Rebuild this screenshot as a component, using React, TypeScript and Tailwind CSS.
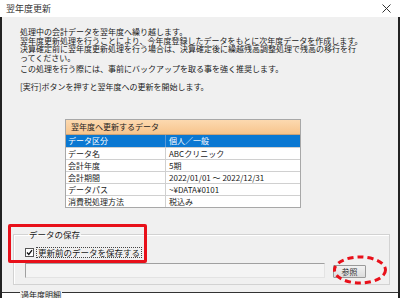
import React from "react";

const rows: [string, string][] = [
  ["データ区分", "個人／一般"],
  ["データ名", "ABCクリニック"],
  ["会計年度", "5期"],
  ["会計期間", "2022/01/01 ～ 2022/12/31"],
  ["データパス", "~¥DATA¥0101"],
  ["消費税処理方法", "税込み"],
];

function CloseIcon() {
  return (
    <svg width="9" height="9" viewBox="0 0 9 9">
      <path d="M0.5 0.5 L8.5 8.5 M8.5 0.5 L0.5 8.5" stroke="#333" strokeWidth="1" />
    </svg>
  );
}

export default function App() {
  return (
    <div
      className="relative w-[400px] h-[298px] overflow-hidden bg-white flex flex-col text-[#1a1a1a]"
      style={{ fontFamily: '"Noto Sans CJK JP", "Noto Sans", sans-serif' }}
    >
      {/* title bar */}
      <div className="h-[17px] shrink-0 flex items-center justify-between pl-[6px] pr-[9px] bg-white">
        <span className="text-[9px] leading-[9px] text-[#333]">翌年度更新</span>
        <CloseIcon />
      </div>

      {/* body */}
      <div className="flex-1 bg-[#f0f0f0] border-l-2 border-r-2 border-[#222] pl-[18px] pr-[8px] pt-[11px] text-[8px]">
        <div className="leading-[8.5px] tracking-[0px]">
          <p>処理中の会計データを翌年度へ繰り越します。</p>
          <p>翌年度更新処理を行うことにより、今年度登録したデータをもとに次年度データを作成します。</p>
          <p>決算確定前に翌年度更新処理を行う場合は、決算確定後に繰越残高調整処理で残高の移行を行</p>
          <p>ってください。</p>
        </div>
        <p className="mt-[2px] leading-[9px]">この処理を行う際には、事前にバックアップを取る事を強く推奨します。</p>
        <p className="mt-[9px] leading-[9px]">[実行]ボタンを押すと翌年度への更新を開始します。</p>

        {/* data table */}
        <div className="mt-[28px] ml-[45px] w-[236px] border border-[#a8a8a8] bg-white">
          <div className="h-[15px] flex items-center pl-[5px] bg-gradient-to-b from-[#fcd9b0] to-[#f7c48c] border-b border-[#c9a37a] text-[#222]">
            翌年度へ更新するデータ
          </div>
          {rows.map(([k, v], i) => (
            <div
              key={k}
              className={
                i === 0
                  ? "h-[12px] flex bg-[#0a78d2] text-white"
                  : "h-[12px] flex border-t border-[#d0d0d0]"
              }
            >
              <div className={i === 0 ? "w-[100px] pl-[2px] leading-[12px] border-r border-[#5a9ad8]" : "w-[100px] pl-[2px] leading-[11px] border-r border-[#d0d0d0]"}>
                {k}
              </div>
              <div className={i === 0 ? "flex-1 pl-[3px] leading-[12px]" : "flex-1 pl-[3px] leading-[11px]"}>{v}</div>
            </div>
          ))}
        </div>

        {/* save group */}
        <fieldset className="mt-[22px] -ml-[7px] mr-[0px] h-[55px] border border-[#d2d2d2] shadow-[inset_1px_1px_0_#fff] px-[11px]">
          <legend className="ml-[3px] px-[1px] leading-[9px] text-[8.5px]">データの保存</legend>
          <div className="mt-[8px] flex items-center gap-[2px]">
            <span className="w-[9px] h-[9px] border border-[#555] bg-white flex items-center justify-center">
              <svg width="7" height="7" viewBox="0 0 7 7">
                <path d="M1 3.5 L2.8 5.5 L6 1.2" stroke="#111" strokeWidth="1.3" fill="none" />
              </svg>
            </span>
            <span className="px-[1px] border border-dotted border-[#444] leading-[9px] text-[8.5px]">更新前のデータを保存する</span>
          </div>
          <div className="mt-[5px] flex items-end">
            <div className="w-[300px] h-[15px] bg-[#f4f4f4] border border-[#a0a0a0] border-b-[#e3e3e3] border-r-[#e3e3e3]" />
            <button className="ml-[8px] mb-[0px] w-[33px] h-[13px] border border-[#9a9a9a] rounded-[1px] bg-gradient-to-b from-[#f2f2f2] to-[#dcdcdc] text-[8px] leading-[10px] text-[#333]">
              参照
            </button>
          </div>
        </fieldset>

        {/* next group (cut off) */}
        <div className="relative mt-[7px] -ml-[18px] -mr-[8px] border-t border-[#333] h-[10px] bg-white">
          <span className="absolute left-[18px] -top-[3px] bg-[#f0f0f0] px-[1px] text-[8px] leading-[9px]">過年度明細</span>
        </div>
      </div>

      {/* annotations */}
      <div className="absolute left-[8px] top-[224px] w-[139px] h-[39px] border-[3px] border-[#e8101a] rounded-[2px]" />
      <svg className="absolute left-[332px] top-[255px]" width="56" height="30" viewBox="0 0 56 30">
        <ellipse cx="28" cy="15" rx="25.5" ry="13" fill="none" stroke="#e8101a" strokeWidth="3" strokeDasharray="6 4" />
      </svg>
    </div>
  );
}
